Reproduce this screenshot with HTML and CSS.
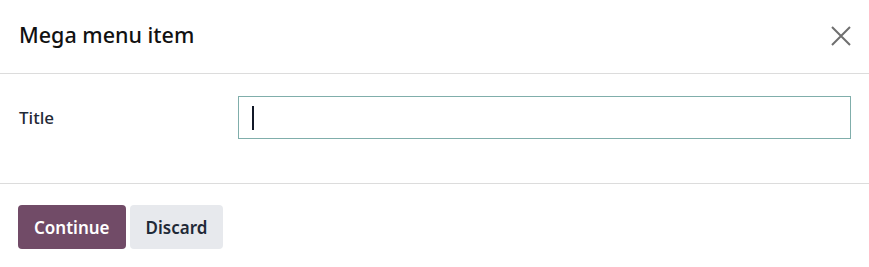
FILE: index.html
```html
<!DOCTYPE html>
<html lang="en">

<head>
    <meta charset="UTF-8">
    <meta name="viewport" content="width=device-width, initial-scale=1.0">
    <title>Mega menu item</title>
    <link rel="stylesheet" href="styles.css">
</head>

<body>
    <div class="modal">
        <header class="modal-header">
            <h4 class="modal-title">Mega menu item</h4>
            <button class="btn-close" aria-label="Close">
                <svg width="20" height="20" viewBox="0 0 20 20">
                    <path d="M1 1 L19 19 M19 1 L1 19" stroke="#6f6f6f" stroke-width="2" fill="none" />
                </svg>
            </button>
        </header>
        <main class="modal-body">
            <div class="field-row">
                <label class="field-label" for="title">Title</label>
                <div class="field-input" id="title"><span class="caret"></span></div>
            </div>
        </main>
        <footer class="modal-footer">
            <button class="btn btn-primary">Continue</button>
            <button class="btn btn-secondary">Discard</button>
        </footer>
    </div>
</body>

</html>
```

FILE: styles.css
```css
body {
    font-family: "Noto Sans", "Liberation Sans", sans-serif;
    background-color: #fff;
    color: #111827;
    margin: 0;
    padding: 0;
}

.modal {
    width: 869px;
    height: 267px;
    display: flex;
    flex-direction: column;
}

.modal-header {
    height: 74px;
    border-bottom: 1px solid #dcdcdc;
    display: flex;
    align-items: center;
    justify-content: space-between;
    padding: 0 18px 4px 19px;
    box-sizing: border-box;
}

.modal-title {
    margin: 0;
    font-size: 21.5px;
    font-weight: 500;
    color: #111;
}

.btn-close {
    background: none;
    border: none;
    padding: 0;
    width: 20px;
    height: 20px;
    cursor: pointer;
    margin-top: 2px;
}

.modal-body {
    height: 110px;
    border-bottom: 1px solid #dcdcdc;
    padding: 22px 18px 0 19px;
    box-sizing: border-box;
}

.field-row {
    display: flex;
    align-items: center;
}

.field-label {
    width: 219px;
    font-size: 17px;
    font-weight: 500;
    color: #1f2937;
}

.field-input {
    flex: 1;
    height: 43px;
    border: 1px solid #80aeab;
    box-sizing: border-box;
    display: flex;
    align-items: center;
    padding-left: 13px;
}

.caret {
    width: 2px;
    height: 24px;
    background-color: #111827;
}

.modal-footer {
    flex: 1;
    display: flex;
    align-items: flex-start;
    gap: 4px;
    padding: 21px 18px 0 18px;
}

.btn {
    height: 44px;
    border: none;
    border-radius: 4px;
    font-family: inherit;
    font-size: 17px;
    font-weight: 600;
    padding: 0 16px;
    cursor: pointer;
}

.btn-primary {
    background-color: #714b67;
    color: #fff;
}

.btn-secondary {
    background-color: #e7e9ed;
    color: #1f2937;
}
```
